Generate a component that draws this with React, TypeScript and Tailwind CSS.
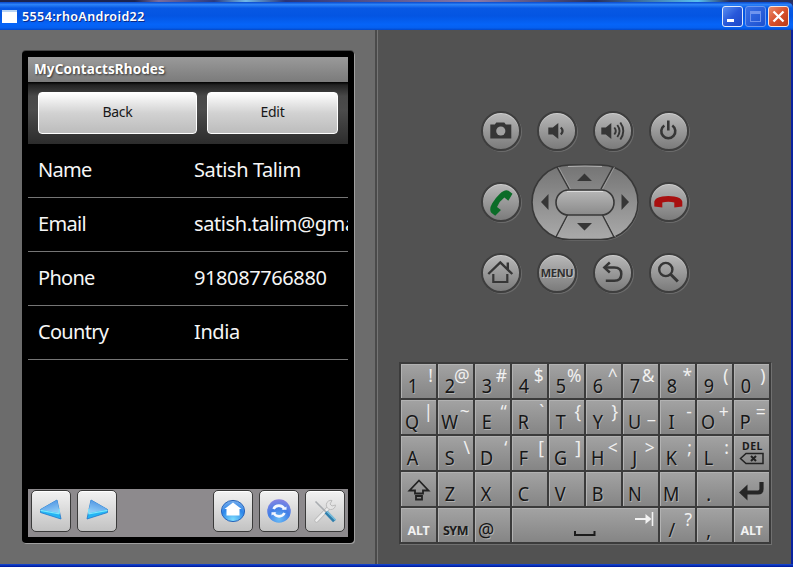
import type { ReactNode } from "react";

type KeySpec = { main?: string; alt?: string; span?: boolean; node?: ReactNode };

const FONT = "font-['Noto_Sans','Open_Sans',sans-serif]";

function chars(mains: string, alts: string[]): KeySpec[] {
  return mains.split("").map((main, i) => ({ main, alt: alts[i] }));
}

function WordKey({ text, light }: { text: string; light?: boolean }) {
  return (
    <span
      className={
        light
          ? "flex h-full items-end justify-center pb-[3px] text-[12.5px] leading-[17px] font-bold tracking-[-0.2px] text-[#f2f2f2]"
          : "flex h-full items-end justify-center pb-[3px] text-[12.5px] leading-[17px] font-bold tracking-[-0.5px] text-[#1c1c1c] [text-shadow:1px_1px_0_#b0b0b0]"
      }
    >
      {text}
    </span>
  );
}

const ShiftIcon = (
  <svg width="35" height="34" viewBox="0 0 35 34" fill="none" stroke="#222" strokeWidth="1.8">
    <path d="M18 8.5 L27.5 18.5 H22 V21.5 H14 V18.5 H8.5 Z" />
    <path d="M15 24 H21 V27.5 H15 Z" />
  </svg>
);

const DelIcon = (
  <span className="flex h-full flex-col items-center pt-[5px]">
    <span className="pl-[2px] text-[10.5px] leading-[11px] font-bold tracking-[0.5px] text-[#1c1c1c]">DEL</span>
    <svg width="26" height="13" viewBox="0 0 26 13" fill="none" stroke="#222" strokeWidth="1.5">
      <path d="M1.5 6.500 L7 1.500 H24 V11.500 H7 Z" />
      <path d="M12 4 L17 9 M17 4 L12 9" strokeWidth="2" />
    </svg>
  </span>
);

const EnterIcon = (
  <svg width="35" height="34" viewBox="0 0 35 34" fill="none">
    <path d="M27.500 10 V17 Q27.500 20.500 24 20.500 H13" stroke="#262626" strokeWidth="4.200" />
    <path d="M5 20.500 L13.500 12.500 V28.500 Z" fill="#262626" />
  </svg>
);

const SpaceIcon = (
  <svg width="146" height="34" viewBox="0 0 146 34" fill="none">
    <path d="M63 23 V27 H82.500 V23" stroke="#1c1c1c" strokeWidth="2" />
    <path d="M123 11 H137" stroke="#f2f2f2" strokeWidth="2" />
    <path d="M133.500 6 L139.500 11 L133.500 16 Z" fill="#f2f2f2" />
    <path d="M140.500 4 V18" stroke="#f2f2f2" strokeWidth="1.600" />
  </svg>
);

const KEYS: KeySpec[] = [
  ...chars("1234567890", ["!", "@", "#", "$", "%", "^", "&", "*", "(", ")"]),
  ...chars("QWERTYUIOP", ["|", "~", "“", "`", "{", "}", "_", "-", "+", "="]),
  ...chars("ASDFGHJKL", ["", "\\", "‘", "[", "]", "<", ">", ";", ":"]),
  { node: DelIcon },
  { node: ShiftIcon },
  ...chars("ZXCVBNM.", []),
  { node: EnterIcon },
  { node: <WordKey text="ALT" light /> },
  { node: <WordKey text="SYM" /> },
  { main: "@" },
  { node: SpaceIcon, span: true },
  { main: "/", alt: "?" },
  { main: "," },
  { node: <WordKey text="ALT" light /> },
];

function Key({ spec }: { spec: KeySpec }) {
  return (
    <div
      className={
        (spec.span ? "col-span-4 " : "") +
        "relative h-[34px] border-t border-l border-[#b2b2b2] bg-gradient-to-b from-[#a2a2a2] to-[#858585]"
      }
    >
      {spec.node ? (
        <div className="-mt-px -ml-px h-[34px]">{spec.node}</div>
      ) : (
        <div className="flex w-[21px] justify-center pt-[6px] text-[20.5px] leading-[28px] text-[#161616] [text-shadow:1px_1px_0_#b0b0b0]">
          <span className="origin-center scale-x-[0.88]">{spec.main}</span>
        </div>
      )}
      {spec.alt ? (
        <span className="absolute top-[-2px] right-[3px] origin-right scale-x-[0.94] text-[18.5px] leading-[24px] text-[#f0f0f0]">
          {spec.alt}
        </span>
      ) : null}
    </div>
  );
}

function RoundButton({ children }: { children: ReactNode }) {
  return (
    <div className="flex h-10 w-10 items-center justify-center rounded-full border-2 border-[#3e3e3e] bg-gradient-to-b from-[#b9b9b9] to-[#7b7b7b] shadow-[1px_1px_0_0_#6c6c6c,inset_0_1px_0_#cfcfcf]">
      {children}
    </div>
  );
}

function Glyph({ children }: { children: ReactNode }) {
  return (
    <svg width="40" height="40" viewBox="0.7 0 40 40" fill="none" className="shrink-0">
      {children}
    </svg>
  );
}

function DPad() {
  return (
    <svg width="110" height="80" viewBox="0 0 110 80" fill="none" className="mt-[-1px] shrink-0">
      <defs>
        <linearGradient id="pad" x1="0" y1="0" x2="0" y2="1">
          <stop offset="0" stopColor="#747474" />
          <stop offset="1" stopColor="#aaaaaa" />
        </linearGradient>
        <linearGradient id="pill" x1="0" y1="0" x2="0" y2="1">
          <stop offset="0" stopColor="#b8b8b8" />
          <stop offset="1" stopColor="#8a8a8a" />
        </linearGradient>
      </defs>
      <rect x="3" y="4" width="106" height="75" rx="37.5" fill="#707070" />
      <rect x="2" y="3" width="106" height="74.5" rx="37.2" fill="url(#pad)" stroke="#383838" strokeWidth="1.6" />
      <path d="M38 4.5 Q55 3.6 72 4.5" stroke="#b0b0b0" />
      <path d="M27 5 L39 27 M83 5 L71 27 M38 52 L26 75 M72 52 L84 75" stroke="#383838" strokeWidth="1.5" />
      <path d="M28.5 5 L40.5 27 M84.5 5 L72.5 27 M39.5 52 L27.5 75 M73.5 52 L85.5 75" stroke="#a8a8a8" strokeWidth="0.7" />
      <rect x="26" y="28" width="58" height="25" rx="12.5" fill="url(#pill)" stroke="#383838" strokeWidth="1.6" />
      <path d="M37 29.5 H73" stroke="#dcdcdc" />
      <path d="M47 19 L54.5 11.5 L62 19 Z M47 61 H62 L54.5 68.5 Z M18.500 32 V48 L11 40 Z M91.500 32 V48 L99 40 Z" fill="#363636" />
    </svg>
  );
}

function ToolButton({ children }: { children: ReactNode }) {
  return (
    <div className="flex h-[42px] w-10 items-center justify-center rounded-[5px] border-[1.5px] border-[#3a3a3a] bg-gradient-to-b from-[#f2f2f2] to-[#c2c2c2] shadow-[inset_0_1px_0_#fff]">
      {children}
    </div>
  );
}

function Wedge({ flip }: { flip?: boolean }) {
  return (
    <svg width="24" height="24" viewBox="0 0 24 24" className={flip ? "mt-[-3px] -scale-x-100" : "mt-[-3px]"}>
      <defs>
        <linearGradient id="wedge" x1="0" y1="0" x2="0.4" y2="1">
          <stop offset="0" stopColor="#3f86dd" />
          <stop offset="1" stopColor="#8ccaf6" />
        </linearGradient>
      </defs>
      <path d="M1.500 11.500 L18 2 L22 21 L1.500 14.500 Z" fill="#24b4f4" stroke="#2076cc" strokeWidth="0.8" />
      <path d="M1.500 11.500 L18 2 L21 15.500 Z" fill="url(#wedge)" />
      <path d="M1.500 12.300 L20 15.800 L20.500 11" fill="none" stroke="#7ce6fc" strokeWidth="1.200" />
    </svg>
  );
}

function Orb({ kind }: { kind: "home" | "sync" }) {
  return (
    <svg width="26" height="26" viewBox="0 0 26 26" className="mt-[-1px]">
      <defs>
        <radialGradient id="orbHome" cx="0.5" cy="0.9" r="0.9">
          <stop offset="0" stopColor="#7cdcfc" />
          <stop offset="0.6" stopColor="#2c85ea" />
          <stop offset="1" stopColor="#7cb0ec" />
        </radialGradient>
        <radialGradient id="orbSync" cx="0.5" cy="0.85" r="0.9">
          <stop offset="0" stopColor="#68bcf6" />
          <stop offset="0.5" stopColor="#427fe6" />
          <stop offset="1" stopColor="#9184e2" />
        </radialGradient>
      </defs>
      {kind === "home" ? (
        <>
          <ellipse cx="13" cy="13" rx="11.600" ry="10.600" fill="url(#orbHome)" stroke="#2a65ba" strokeWidth="1" />
          <path d="M13 4.500 L21.500 11 H19.500 V17.500 H6.500 V11 H4.500 Z" fill="#fff" />
        </>
      ) : (
        <>
          <circle cx="13" cy="13" r="11.800" fill="url(#orbSync)" />
          <path d="M7.500 11 A6 6 0 0 1 18.300 11 M18.500 15 A6 6 0 0 1 7.700 15" fill="none" stroke="#f4f8ff" strokeWidth="2.600" />
          <path d="M15.500 11.800 H20.500 V8.500 Z M10.500 14.200 H5.500 V17.500 Z" fill="#f4f8ff" />
        </>
      )}
    </svg>
  );
}

function Tools() {
  return (
    <svg width="26" height="26" viewBox="0 0 26 26" fill="none" className="mt-[-1px]">
      <path d="M4.500 22.500 L16 10.500" stroke="#b4b4b4" strokeWidth="4" strokeLinecap="round" />
      <path d="M4.500 22.500 L16 10.500" stroke="#ededed" strokeWidth="2.600" strokeLinecap="round" />
      <path d="M20 2.500 A4.600 4.600 0 1 0 23.500 7 L20 8 L18 6 Z" fill="#e4e4e4" stroke="#bcbcbc" />
      <path d="M3.500 3.500 L14 14" stroke="#a8acb0" strokeWidth="1.600" />
      <path d="M14 14 L22.500 23" stroke="#2f7eac" strokeWidth="4" />
      <path d="M15 13.500 L23.500 22" stroke="#7cc0de" strokeWidth="1.500" />
    </svg>
  );
}

function TitleBar() {
  return (
    <header className="flex h-[30px] shrink-0 flex-col bg-[#27306d]">
      <div className="h-[2px] bg-[linear-gradient(to_right,#1c2450_0%,#1c2450_17%,#7a6c9c_20%,#2a3a80_27%,#70b8e8_31%,#2a3478_36%,#8878a8_60%,#28305e_75%,#58c0f0_88%,#28305e_92%)]" />
      <div className="flex h-[28px] items-center rounded-tr-[6px] bg-[linear-gradient(to_bottom,#0a48cc_0%,#2c82f8_9%,#0858e4_22%,#0455e2_50%,#0564f8_80%,#0560f0_92%,#0348c8_100%)] pr-[4px] pl-[2px]">
        <div className="h-[13px] w-[15px] border-t-2 border-[#b8d4f4] bg-white" />
        <span className="mt-[2px] ml-[5px] grow text-[12.5px] leading-4 font-semibold tracking-[0.4px] whitespace-nowrap text-white [text-shadow:1px_1px_0_#0a2a8a]">
          5554:rhoAndroid22
        </span>
        <div className="flex gap-[2px]">
          <div className="flex h-[21px] w-[21px] items-end rounded-[3px] border border-[#dfe9fb] bg-gradient-to-br from-[#5a8df0] via-[#2858da] to-[#1c48c8] pb-[4px] pl-[4px]">
            <div className="h-[3px] w-[7px] bg-white" />
          </div>
          <div className="flex h-[21px] w-[21px] items-center justify-center rounded-[3px] border border-[#6d98ec] bg-gradient-to-br from-[#396fe6] to-[#1b50d0]">
            <div className="h-[11px] w-[11px] border border-t-[3px] border-[#6f94ee]" />
          </div>
          <div className="flex h-[21px] w-[21px] items-center justify-center rounded-[3px] border border-[#f4e4e0] bg-gradient-to-br from-[#e98a68] via-[#d8502c] to-[#b83a18]">
            <svg width="13" height="13" viewBox="0 0 13 13">
              <path d="M1.500 1.500 L11.500 11.500 M11.500 1.500 L1.500 11.500" stroke="#fff" strokeWidth="2.300" />
            </svg>
          </div>
        </div>
      </div>
    </header>
  );
}

const ROWS = [
  ["Name", "Satish Talim"],
  ["Email", "satish.talim@gmail.com"],
  ["Phone", "918087766880"],
  ["Country", "India"],
];

function Phone() {
  return (
    <div className="h-[492px] w-[332px] rounded-[4px] bg-black p-[6px] shadow-[0_-1px_0_#444,1px_1px_0_#a0a0a0]">
      <div className="flex h-[480px] w-[320px] flex-col overflow-hidden">
        <div className="h-[25px] shrink-0 bg-gradient-to-b from-[#9a9a9a] to-[#7b7b7b] pl-[6px] text-[13.5px] leading-[24px] font-bold tracking-[0.1px] text-white [text-shadow:1px_1px_2px_#333]">
          MyContactsRhodes
        </div>
        <div className="flex h-[62px] shrink-0 gap-[10px] bg-[linear-gradient(to_bottom,#000_0,#222_3px,#484848_14px,#4c4c4c_45%,#2c2c2c_100%)] px-[10px] pt-[10px]">
          {["Back", "Edit"].map((label) => (
            <div
              key={label}
              className={
                (label === "Back" ? "w-[159px] " : "w-[131px] ") +
                "flex h-[42px] items-center justify-center rounded-[4px] border border-white bg-gradient-to-b from-[#ffffff] via-[#d2d2d2] to-[#bcbcbc] pb-[3px] text-[14px] tracking-[-0.3px] text-[#181818]"
              }
            >
              {label}
            </div>
          ))}
        </div>
        {ROWS.map(([name, value]) => (
          <div
            key={name}
            className="flex h-[54px] shrink-0 items-center border-b border-[#757575] pb-[2px] pl-[10px] text-[20px] whitespace-nowrap text-[#f6f6f6]"
          >
            <span className="w-[156px] shrink-0 tracking-[-0.7px]">{name}</span>
            <span className="tracking-[-0.4px]">{value}</span>
          </div>
        ))}
        <div className="mt-auto flex h-[48px] shrink-0 gap-[6px] bg-[#8d8a8d] px-[3px] pt-px">
          <ToolButton>
            <Wedge />
          </ToolButton>
          <ToolButton>
            <Wedge flip />
          </ToolButton>
          <div className="grow" />
          <ToolButton>
            <Orb kind="home" />
          </ToolButton>
          <ToolButton>
            <Orb kind="sync" />
          </ToolButton>
          <ToolButton>
            <Tools />
          </ToolButton>
        </div>
      </div>
    </div>
  );
}

const D = "#363636";
const HANDSET =
  "M6 24.500 V19.500 Q7 15.500 14 14.500 Q20 13.500 26 14.500 Q33 15.500 34 19.500 V24.500 L26 25.500 V20.500 Q20 18.800 14 20.500 V25.500 Z";

function Controls() {
  return (
    <div className="ml-[103px] grid w-[208px] grid-cols-[repeat(4,40px)] grid-rows-[repeat(3,40px)] gap-x-[16px] gap-y-[31px]">
      <RoundButton>
        <Glyph>
          <path d="M10 13.500 H14.500 L16 11.500 H24 L25.500 13.500 H31 V27.500 H10 Z" fill={D} />
          <circle cx="20.500" cy="20" r="4.600" fill="#a2a2a2" />
        </Glyph>
      </RoundButton>
      <RoundButton>
        <Glyph>
          <path d="M12 16.500 H16.500 L22 12 V28 L16.500 23.500 H12 Z" fill={D} />
          <path d="M24.500 16.500 Q28 20 24.500 23.500" stroke={D} strokeWidth="2.200" />
        </Glyph>
      </RoundButton>
      <RoundButton>
        <Glyph>
          <path d="M9 16.500 H13.500 L19 12 V28 L13.500 23.500 H9 Z" fill={D} />
          <path d="M22 16.500 Q25 20 22 23.500 M25 14 Q29.500 20 25 26 M28 11.500 Q34 20 28 28.500" stroke={D} strokeWidth="1.900" />
        </Glyph>
      </RoundButton>
      <RoundButton>
        <Glyph>
          <path d="M16 14.500 A7 7 0 1 0 24 14.500" stroke={D} strokeWidth="2.600" />
          <path d="M20 9.500 V19.500" stroke={D} strokeWidth="2.600" />
        </Glyph>
      </RoundButton>
      <RoundButton>
        <Glyph>
          <path d={HANDSET} transform="rotate(-52 20 20)" fill="#0b6c28" />
        </Glyph>
      </RoundButton>
      <div className="col-span-2 flex items-center justify-center">
        <DPad />
      </div>
      <RoundButton>
        <Glyph>
          <path d={HANDSET} fill="#a81010" />
        </Glyph>
      </RoundButton>
      <RoundButton>
        <Glyph>
          <path d="M8 21 L20 9.500 L32 21 M27.500 9.500 V16" stroke={D} strokeWidth="2.400" />
          <path d="M13 21 V29 H27 V21" stroke={D} strokeWidth="2.200" />
        </Glyph>
      </RoundButton>
      <RoundButton>
        <span className="text-[11px] font-bold tracking-[-0.3px] text-[#303030] [text-shadow:1px_1px_0_#c0c0c0]">MENU</span>
      </RoundButton>
      <RoundButton>
        <Glyph>
          <path d="M17.500 9.500 L12 14.500 L17.500 19.500" stroke={D} strokeWidth="2.400" />
          <path d="M12.500 14.500 H22 Q29 14.500 29 21 Q29 27.800 22 27.800 H13.500" stroke={D} strokeWidth="2.500" />
        </Glyph>
      </RoundButton>
      <RoundButton>
        <Glyph>
          <circle cx="17.500" cy="16.500" r="6.600" stroke={D} strokeWidth="2.400" />
          <path d="M22 21 L29.500 28.500" stroke={D} strokeWidth="3" />
        </Glyph>
      </RoundButton>
    </div>
  );
}

export default function App() {
  return (
    <div className={"flex h-[567px] w-[793px] flex-col overflow-hidden bg-[#0a22a0] " + FONT}>
      <TitleBar />
      <div className="flex h-[534px] shrink-0">
        <div className="w-[375px] bg-[#6c6c6c] pt-[21px] pl-[22px]">
          <Phone />
        </div>
        <div className="w-[2px] bg-[#4a4a4a]" />
        <div className="w-px bg-[#757575]" />
        <div className="flex w-[413px] flex-col bg-[#525252] pt-[81px]">
          <Controls />
          <div className="mt-[69px] ml-[21px] grid h-[182px] w-[372px] grid-cols-[repeat(10,35px)] gap-[2px] border-2 border-[#3b3b3b] bg-[#3b3b3b] shadow-[1px_1px_0_#707070]">
            {KEYS.map((spec, i) => (
              <Key key={i} spec={spec} />
            ))}
          </div>
        </div>
      </div>
      <div className="h-[3px] bg-gradient-to-b from-[#1a48d0] to-[#00149c]" />
    </div>
  );
}
